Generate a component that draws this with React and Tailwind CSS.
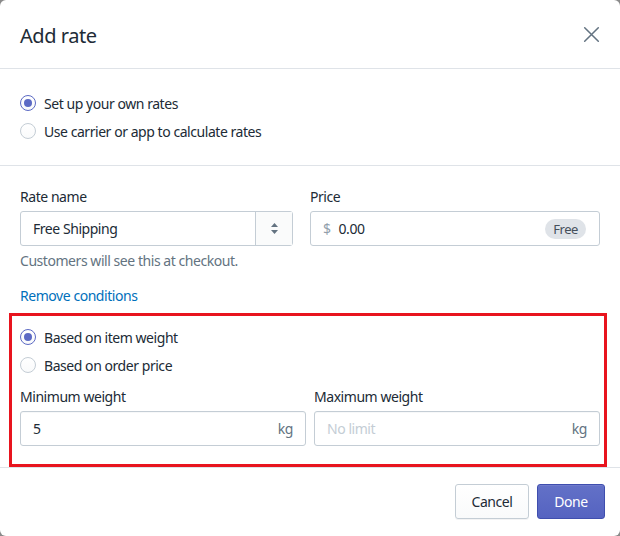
import { useState } from "react";

function Radio({ checked, label, onClick }) {
  return (
    <label className="flex h-7 items-center gap-2 cursor-pointer" onClick={onClick}>
      <span
        className={
          "flex h-4 w-4 items-center justify-center rounded-full border bg-gradient-to-b from-white to-[#f9fafb] " +
          (checked ? "border-[#5c6ac4]" : "border-[#c4cdd5]")
        }
      >
        {checked && <span className="h-2 w-2 rounded-full bg-[#5c6ac4]" />}
      </span>
      <span className="text-[14px] text-[#212b36]">{label}</span>
    </label>
  );
}

function UnitInput({ value, placeholder, unit }) {
  return (
    <div className="flex h-[35px] items-center rounded-[3px] border border-[#c4cdd5] bg-white px-3 shadow-[inset_0_1px_0_0_rgba(99,115,129,0.05)]">
      <span className={"flex-1 text-[14px] " + (value ? "text-[#212b36]" : "text-[#c4cdd5]")}>
        {value || placeholder}
      </span>
      <span className="text-[14px] text-[#637381]">{unit}</span>
    </div>
  );
}

export default function App() {
  const [mode, setMode] = useState("own");
  const [basis, setBasis] = useState("weight");

  return (
    <div
      className="h-[536px] w-[620px] bg-[#8a8a8a] tracking-[-0.45px]"
      style={{ fontFamily: '"Noto Sans", "Open Sans", sans-serif' }}
    >
      <div className="flex h-full w-full flex-col rounded-[6px] bg-white">
        {/* Header */}
        <div className="flex h-[69px] items-center justify-between border-b border-[#dfe3e8] pl-5 pr-5">
          <h2 className="pt-[3px] text-[20px] text-[#212b36]">Add rate</h2>
          <button className="text-[#637381]">
            <svg width="17" height="17" viewBox="0 0 20 20" fill="none" stroke="currentColor" strokeWidth="1.8" strokeLinecap="round">
              <path d="M2 2l16 16M18 2L2 18" />
            </svg>
          </button>
        </div>

        {/* Rate type */}
        <div className="flex flex-col border-b border-[#dfe3e8] px-5 py-5">
          <Radio checked={mode === "own"} label="Set up your own rates" onClick={() => setMode("own")} />
          <Radio checked={mode === "carrier"} label="Use carrier or app to calculate rates" onClick={() => setMode("carrier")} />
        </div>

        {/* Rate details */}
        <div className="border-b border-[#dfe3e8] px-5 pt-5">
          <div className="flex justify-between">
            <div className="w-[273px]">
              <div className="mb-1 pt-px text-[14px] leading-5 text-[#212b36]">Rate name</div>
              <div className="flex h-[35px] rounded-[3px] border border-[#c4cdd5] bg-white">
                <span className="flex flex-1 items-center px-3 text-[14px] text-[#212b36]">Free Shipping</span>
                <span className="flex w-[37px] flex-col items-center justify-center gap-[3px] border-l border-[#c4cdd5] bg-[#fafbfb]">
                  <svg width="7" height="4" viewBox="0 0 7 4"><path d="M3.5 0L7 4H0z" fill="#637381" /></svg>
                  <svg width="7" height="4" viewBox="0 0 7 4"><path d="M0 0h7L3.5 4z" fill="#637381" /></svg>
                </span>
              </div>
              <div className="mt-[5px] text-[14px] leading-5 text-[#637381]">Customers will see this at checkout.</div>
            </div>
            <div className="w-[290px]">
              <div className="mb-1 pt-px text-[14px] leading-5 text-[#212b36]">Price</div>
              <div className="flex h-[35px] items-center rounded-[3px] border border-[#c4cdd5] bg-white pl-3 pr-[13px]">
                <span className="mr-2 text-[14px] text-[#919eab]">$</span>
                <span className="flex-1 text-[14px] text-[#212b36]">0.00</span>
                <span className="rounded-full bg-[#dfe3e8] px-2 text-[13px] leading-5 text-[#454f5b]">Free</span>
              </div>
            </div>
          </div>

          <div className="mt-[15px] text-[14px] leading-5 text-[#006fbb]">Remove conditions</div>

          <div className="ml-[-11px] mr-[-7px] mt-[7px] border-[3px] border-[#e8141e] pb-[18px] pl-2 pr-1 pt-[7px]">
            <Radio checked={basis === "weight"} label="Based on item weight" onClick={() => setBasis("weight")} />
            <Radio checked={basis === "price"} label="Based on order price" onClick={() => setBasis("price")} />
            <div className="mt-2 flex justify-between">
              <div className="w-[286px]">
                <div className="mb-1 text-[14px] leading-5 text-[#212b36]">Minimum weight</div>
                <UnitInput value="5" unit="kg" />
              </div>
              <div className="w-[286px]">
                <div className="mb-1 text-[14px] leading-5 text-[#212b36]">Maximum weight</div>
                <UnitInput placeholder="No limit" unit="kg" />
              </div>
            </div>
          </div>
        </div>

        {/* Footer */}
        <div className="flex justify-end gap-2 pr-[15px] pt-4">
          <button className="h-[35px] w-[74px] rounded-[3px] border border-[#c4cdd5] bg-gradient-to-b from-white to-[#f9fafb] text-[14px] text-[#212b36] shadow-[0_1px_0_0_rgba(22,29,37,0.05)]">
            Cancel
          </button>
          <button className="h-[35px] w-[68px] rounded-[3px] border border-[#3f4eae] bg-gradient-to-b from-[#6371c7] to-[#5563c1] text-[14px] text-white shadow-[inset_0_1px_0_0_#6f7bcb]">
            Done
          </button>
        </div>
      </div>
    </div>
  );
}
